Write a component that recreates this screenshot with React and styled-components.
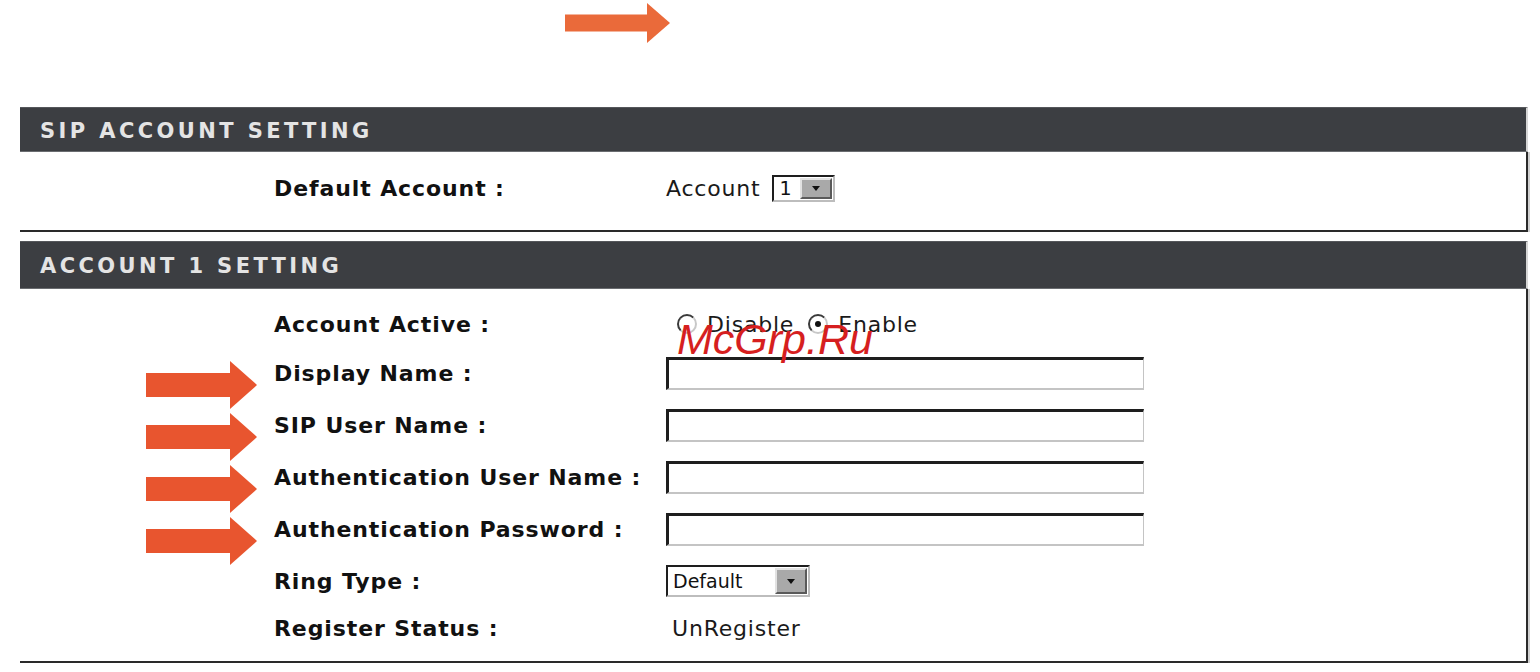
import React from 'react'
import styled, {createGlobalStyle} from 'styled-components'

const Global = createGlobalStyle`
  html, body { margin:0; padding:0; background:#fff; }
  body { font-family:"DejaVu Sans", Verdana, sans-serif; color:#111; }
`;

const Arrow = ({w = 111, h = 48, shaft = 24, head = 27, color = '#e8552f'}) => (
  <svg width={w} height={h} viewBox={`0 0 ${w} ${h}`}>
    <rect x="0" y={(h - shaft) / 2} width={w - head} height={shaft} fill={color} />
    <polygon points={`${w - head},0 ${w},${h / 2} ${w - head},${h}`} fill={color} />
  </svg>
);

const Radio = ({checked, children}) => (
  <RadioWrap>
    <Dot $checked={checked} />
    <span>{children}</span>
  </RadioWrap>
);

const Select = ({value, width, height = 28}) => (
  <SelectBox $w={width} $h={height}>
    <span>{value}</span>
    <SelectBtn><i /></SelectBtn>
  </SelectBox>
);

const fields = ['Display Name :', 'SIP User Name :', 'Authentication User Name :', 'Authentication Password :'];

const App = () => (
  <>
    <Global />
    <Page>
      <TopArea>
        <Arrow w={105} h={40} shaft={17} head={23} color="#ea6a3a" />
      </TopArea>

      <Section>
        <Header $h={45}>SIP ACCOUNT SETTING</Header>
        <Body $pt={22} $pb={28}>
          <Row $h={28}>
            <Pointer />
            <Label>Default Account :</Label>
            <Value>Account <Select value="1" width={63} height={27} /></Value>
          </Row>
        </Body>
      </Section>

      <Gap />

      <Section>
        <Header $h={48}>ACCOUNT 1 SETTING</Header>
        <Body $pt={21} $pb={21}>
          <Watermark>McGrp.Ru</Watermark>
          <Row $h={28}>
            <Pointer />
            <Label>Account Active :</Label>
            <Value $pl={11}>
              <Radio>Disable</Radio>
              <Radio checked>Enable</Radio>
            </Value>
          </Row>
          {fields.map(l => (
            <Row key={l}>
              <Pointer><Arrow /></Pointer>
              <Label>{l}</Label>
              <Value><TextInput /></Value>
            </Row>
          ))}
          <Row $h={32}>
            <Pointer />
            <Label>Ring Type :</Label>
            <Value><Select value="Default" width={144} height={32} /></Value>
          </Row>
          <Row $h={24}>
            <Pointer />
            <Label>Register Status :</Label>
            <Value $pl={6}>UnRegister</Value>
          </Row>
        </Body>
      </Section>
    </Page>
  </>
);

const Page = styled.div`
  width:1540px; height:672px; overflow:hidden;
`;
const TopArea = styled.div`
  height:107px; box-sizing:border-box;
  padding:3px 0 0 565px;
  svg{display:block;}
`;
const Section = styled.div`
  margin-left:20px; width:1508px;
`;
const Gap = styled.div`height:9px;`;
const Header = styled.div`
  height:${p => p.$h}px; box-sizing:border-box;
  background:#3c3e42;
  border-top:1px solid #55575b;
  border-bottom:1px solid #6a6c70;
  border-right:2px solid #d6d6d6;
  color:#e4e4e4;
  font-size:21px; font-weight:bold; letter-spacing:3.4px;
  display:flex; align-items:center; padding:2px 0 0 20px;
`;
const Body = styled.div`
  position:relative;
  display:flex; flex-direction:column; gap:19px;
  padding:${p => p.$pt}px 0 ${p => p.$pb}px 0;
  border-right:2px solid #2a2a2a;
  border-bottom:2px solid #2a2a2a;
  box-shadow:2px 0 0 #d0d0d0;
`;
const Row = styled.div`
  display:grid; grid-template-columns:254px 392px 1fr;
  grid-template-rows:minmax(0, 1fr);
  align-items:center;
  height:${p => p.$h || 33}px;
`;
const Pointer = styled.div`
  height:0; overflow:visible;
  display:flex; align-items:center; justify-content:flex-end; padding-right:17px;
  transform:translateY(11px);
  svg{display:block; flex:none;}
`;
const Label = styled.div`
  font-size:22px; font-weight:bold; letter-spacing:0.9px;
  color:#111; white-space:nowrap;
`;
const Value = styled.div`
  display:flex; align-items:center; gap:12px;
  font-size:22px; letter-spacing:0.8px; color:#1a1a1a; white-space:nowrap;
  padding-left:${p => p.$pl || 0}px;
`;
const TextInput = styled.div`
  width:478px; height:33px; box-sizing:border-box;
  border-style:solid; border-width:3px 1px 2px 3px;
  border-color:#1e1e1e #c4c4c4 #c4c4c4 #1e1e1e;
  background:#fff;
`;
const SelectBox = styled.div`
  width:${p => p.$w}px; height:${p => p.$h}px; box-sizing:border-box;
  display:flex; align-items:stretch;
  border-style:solid; border-width:2px;
  border-color:#1e1e1e #bdbdbd #bdbdbd #1e1e1e;
  background:#fff; font-size:19px; letter-spacing:0; color:#111;
  span{flex:1; display:flex; align-items:center; padding-left:5px;}
`;
const SelectBtn = styled.div`
  width:28px; margin:1px; background:#a9a9a9;
  border-style:solid; border-width:2px;
  border-color:#e2e2e2 #5a5a5a #5a5a5a #e2e2e2;
  display:flex; align-items:center; justify-content:center;
  i{width:0; height:0; border-left:4px solid transparent; border-right:4px solid transparent; border-top:5px solid #111;}
`;
const RadioWrap = styled.label`
  display:flex; align-items:center; gap:10px; margin-right:2px;
`;
const Dot = styled.span`
  width:20px; height:20px; box-sizing:border-box; border-radius:50%;
  border:2px solid; border-color:#3a3a3a #c8c8c8 #c8c8c8 #3a3a3a;
  display:flex; align-items:center; justify-content:center;
  &::after{
    content:''; width:6px; height:6px; border-radius:50%;
    background:#111; display:${p => p.$checked ? 'block' : 'none'};
  }
`;
const Watermark = styled.div`
  position:absolute; left:657px; top:26px;
  font-family:"Liberation Sans", Arial, sans-serif; font-style:italic;
  font-size:43px; color:#d61f1f; pointer-events:none; z-index:2;
`;

export default App
